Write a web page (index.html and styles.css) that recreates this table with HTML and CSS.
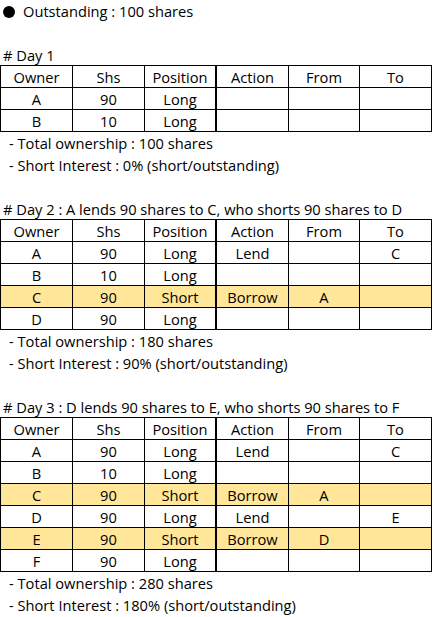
FILE: index.html
```html
<!DOCTYPE html>
<html>
<head>
<meta charset="utf-8">
<link rel="stylesheet" href="styles.css">
</head>
<body>
<div class="sheet">
  <div class="line title"><span class="dot"></span>Outstanding : 100 shares</div>
  <div class="line"></div>
  <div class="line head"># Day 1</div>
  <table class="grid">
    <tr><td>Owner</td><td>Shs</td><td class="split">Position</td><td>Action</td><td>From</td><td>To</td></tr>
    <tr><td>A</td><td>90</td><td class="split">Long</td><td></td><td></td><td></td></tr>
    <tr><td>B</td><td>10</td><td class="split">Long</td><td></td><td></td><td></td></tr>
  </table>
  <div class="line note">- Total ownership : 100 shares</div>
  <div class="line note">- Short Interest : 0% (short/outstanding)</div>
  <div class="line"></div>
  <div class="line head"># Day 2 : A lends 90 shares to C, who shorts 90 shares to D</div>
  <table class="grid">
    <tr><td>Owner</td><td>Shs</td><td class="split">Position</td><td>Action</td><td>From</td><td>To</td></tr>
    <tr><td>A</td><td>90</td><td class="split">Long</td><td>Lend</td><td></td><td>C</td></tr>
    <tr><td>B</td><td>10</td><td class="split">Long</td><td></td><td></td><td></td></tr>
    <tr class="short"><td>C</td><td>90</td><td class="split">Short</td><td>Borrow</td><td>A</td><td></td></tr>
    <tr><td>D</td><td>90</td><td class="split">Long</td><td></td><td></td><td></td></tr>
  </table>
  <div class="line note">- Total ownership : 180 shares</div>
  <div class="line note">- Short Interest : 90% (short/outstanding)</div>
  <div class="line"></div>
  <div class="line head"># Day 3 : D lends 90 shares to E, who shorts 90 shares to F</div>
  <table class="grid">
    <tr><td>Owner</td><td>Shs</td><td class="split">Position</td><td>Action</td><td>From</td><td>To</td></tr>
    <tr><td>A</td><td>90</td><td class="split">Long</td><td>Lend</td><td></td><td>C</td></tr>
    <tr><td>B</td><td>10</td><td class="split">Long</td><td></td><td></td><td></td></tr>
    <tr class="short"><td>C</td><td>90</td><td class="split">Short</td><td>Borrow</td><td>A</td><td></td></tr>
    <tr><td>D</td><td>90</td><td class="split">Long</td><td>Lend</td><td></td><td>E</td></tr>
    <tr class="short"><td>E</td><td>90</td><td class="split">Short</td><td>Borrow</td><td>D</td><td></td></tr>
    <tr><td>F</td><td>90</td><td class="split">Long</td><td></td><td></td><td></td></tr>
  </table>
  <div class="line note">- Total ownership : 280 shares</div>
  <div class="line note">- Short Interest : 180% (short/outstanding)</div>
</div>
</body>
</html>
```
FILE: styles.css
```css
html, body {
  margin: 0;
  padding: 0;
  background: #ffffff;
}
.sheet {
  font-family: "Open Sans", "Noto Sans", sans-serif;
  font-size: 14.67px;
  color: #000000;
  width: 433px;
}
.line {
  height: 22px;
  line-height: 22px;
  white-space: nowrap;
}
.title, .head {
  padding-left: 3px;
}
.note {
  padding-left: 9px;
}
.dot {
  display: inline-block;
  width: 12px;
  height: 12px;
  border-radius: 50%;
  background: #000000;
  margin-right: 8px;
  vertical-align: -1px;
}
.grid {
  border-collapse: separate;
  border-spacing: 0;
  table-layout: fixed;
  width: 432px;
  margin-top: -1px;
  border-top: 1px solid #000;
  border-left: 1px solid #000;
}
.grid tr {
  height: 22px;
}
.grid td {
  box-sizing: border-box;
  height: 22px;
  padding: 0;
  line-height: 20px;
  font-size: 14.67px;
  text-align: center;
  vertical-align: middle;
  border-right: 1px solid #000;
  border-bottom: 1px solid #000;
  white-space: nowrap;
  overflow: hidden;
}
.grid td:nth-child(1) { width: 72px; }
.grid td:nth-child(2) { width: 72px; }
.grid td:nth-child(3) { width: 72px; border-right-width: 2px; }
.grid td:nth-child(4) { width: 72px; }
.grid td:nth-child(5) { width: 71px; }
.grid td:nth-child(6) { width: 72px; }
.grid tr.short td {
  background: #ffe699;
}
```
